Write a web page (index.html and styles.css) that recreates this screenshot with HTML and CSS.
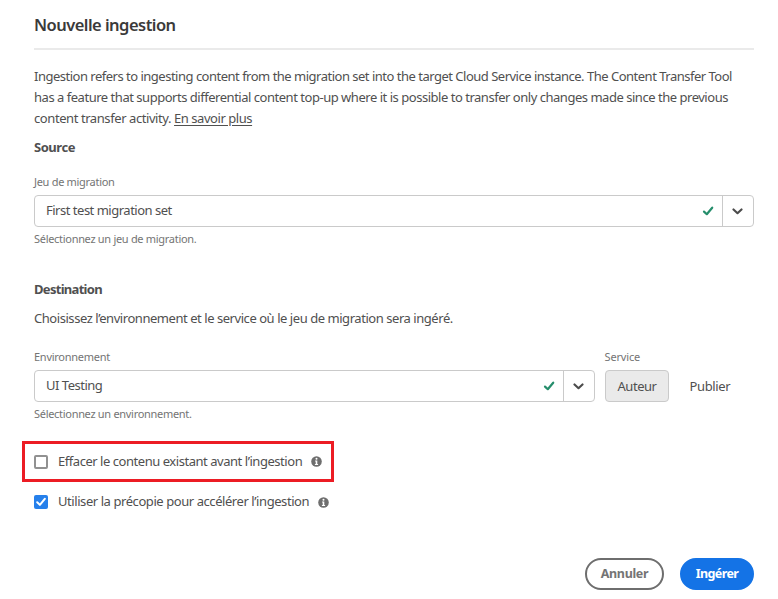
FILE: index.html
```html
<!DOCTYPE html>
<html lang="fr">
<head>
<meta charset="utf-8">
<title>Nouvelle ingestion</title>
<link rel="stylesheet" href="styles.css">
</head>
<body>
<svg class="defs" width="0" height="0" aria-hidden="true">
  <symbol id="chevron" viewBox="0 0 11 7"><path d="M1.5 1.4 5.5 5.2 9.5 1.4" fill="none" stroke="#4b4b4b" stroke-width="2.1" stroke-linecap="round" stroke-linejoin="round"/></symbol>
  <symbol id="valid" viewBox="0 0 12 10"><path d="M2 5.6 4.8 8.2 10.2 1.7" fill="none" stroke="#268e6c" stroke-width="2.2" stroke-linecap="round" stroke-linejoin="round"/></symbol>
  <symbol id="info" viewBox="0 0 11 11"><circle cx="5.5" cy="5.5" r="5.3" fill="#6e6e6e"/><circle cx="5.5" cy="2.7" r="1" fill="#fff"/><path d="M4.1 4.5h2.2v3.4h.8v1H3.9v-1h.8V5.5h-.6z" fill="#fff"/></symbol>
</svg>
<main class="dialog">
  <h1 class="title">Nouvelle ingestion</h1>
  <p class="intro"><span class="line">Ingestion refers to ingesting content from the migration set into the target Cloud Service instance. The Content Transfer Tool</span>
    <span class="line line-second">has a feature that supports differential content top-up where it is possible to transfer only changes made since the previous</span>
    <span class="line line-third">content transfer activity. <a class="link">En savoir plus</a></span></p>

  <section class="source">
    <h2 class="heading heading-source">Source</h2>
    <div class="label">Jeu de migration</div>
    <div class="combo">
      <span class="value">First test migration set</span>
      <svg class="valid"><use href="#valid"/></svg>
      <span class="toggle"><svg class="chevron"><use href="#chevron"/></svg></span>
    </div>
    <div class="help">Sélectionnez un jeu de migration.</div>
  </section>

  <section class="destination">
    <h2 class="heading">Destination</h2>
    <p class="description">Choisissez l’environnement et le service où le jeu de migration sera ingéré.</p>
    <div class="fields">
      <div class="environment">
        <div class="label label-env">Environnement</div>
        <div class="combo">
          <span class="value">UI Testing</span>
          <svg class="valid"><use href="#valid"/></svg>
          <span class="toggle"><svg class="chevron"><use href="#chevron"/></svg></span>
        </div>
        <div class="help">Sélectionnez un environnement.</div>
      </div>
      <div class="service">
        <div class="label label-service">Service</div>
        <div class="choices">
          <span class="choice selected">Auteur</span>
          <span class="choice publish">Publier</span>
        </div>
      </div>
    </div>
  </section>

  <div class="option highlighted">
    <span class="box"></span>
    <span class="option-text">Effacer le contenu existant avant l’ingestion</span>
    <svg class="info"><use href="#info"/></svg>
  </div>
  <div class="option">
    <span class="box checked"><svg class="tick" viewBox="0 0 10 10"><path d="M1.2 5.2 3.9 7.9 8.8 1.8" fill="none" stroke="#fff" stroke-width="2" stroke-linecap="round" stroke-linejoin="round"/></svg></span>
    <span class="option-text precopy">Utiliser la précopie pour accélérer l’ingestion</span>
    <svg class="info"><use href="#info"/></svg>
  </div>

  <footer class="actions">
    <span class="button cancel">Annuler</span>
    <span class="button primary">Ingérer</span>
  </footer>
</main>
</body>
</html>
```
FILE: styles.css
```css
* { box-sizing: border-box; }
body {
  margin: 0;
  background: #fff;
  color: #505050;
  font: 13px/21px "Noto Sans", sans-serif;
  letter-spacing: -.46px;
}
svg { display: block; flex: none; }
.defs { position: absolute; }
h1, h2, p { margin: 0; }
.dialog { width: 720px; margin-left: 34px; padding-top: 12px; }
.title {
  height: 38px;
  border-bottom: 2px solid #eaeaea;
  color: #3a3a3a;
  font-size: 16.5px;
  font-weight: 600;
  line-height: 26px;
  letter-spacing: -.53px;
}
.intro { padding-top: 16px; }
.line { display: block; white-space: nowrap; letter-spacing: -.5px; }
.line-second { letter-spacing: -.475px; }
.line-third { letter-spacing: -.42px; }
.link { text-decoration: underline; text-underline-offset: 2px; letter-spacing: -.45px; }
.source { margin-top: 8px; }
.heading { font-size: 13px; font-weight: 700; line-height: 21px; letter-spacing: -.7px; }
.heading-source { letter-spacing: -.46px; }
.label, .help { color: #747474; font-size: 11px; line-height: 16px; letter-spacing: -.3px; }
.source .label { margin: 16px 0 5px; }
.combo {
  display: flex;
  align-items: center;
  height: 32px;
  padding-left: 11px;
  border: 1px solid #cacaca;
  border-radius: 4px;
}
.value { flex: 1; line-height: 28px; padding-bottom: 2px; letter-spacing: -.49px; }
.valid { width: 12px; height: 10px; margin-right: 8px; }
.toggle {
  display: flex;
  align-items: center;
  width: 31px;
  height: 30px;
  padding-left: 9px;
  border-left: 1px solid #cacaca;
}
.chevron { width: 11px; height: 7px; }
.help { margin-top: 4px; }
.destination { margin-top: 32px; }
.description { margin-top: 8px; letter-spacing: -.45px; }
.fields { display: flex; gap: 10px; margin-top: 20px; }
.fields .label { margin-bottom: 5px; }
.environment { width: 561px; }
.label-env { letter-spacing: -.26px; }
.fields .label-service { margin-left: -.5px; letter-spacing: -.15px; }
.choices { display: flex; gap: 8px; }
.choice {
  height: 32px;
  border: 1px solid transparent;
  border-radius: 4px;
  line-height: 30px;
  padding: 0 11.5px;
}
.selected { width: 64px; background: #eaeaea; border-color: #cacaca; }
.publish { letter-spacing: -.38px; }
.option { display: flex; align-items: center; height: 40px; }
.highlighted {
  width: 312px;
  height: 41px;
  margin: 19px 0 0 -12px;
  padding-left: 9px;
  border: 3px solid #ec1c24;
}
.box { width: 14px; height: 14px; margin-right: 10px; border: 2px solid #919191; border-radius: 2px; }
.checked { display: flex; align-items: center; justify-content: center; border: 0; background: #2680eb; }
.tick { width: 10px; height: 10px; }
.option-text { width: 244px; white-space: nowrap; }
.precopy { width: 251px; padding-bottom: 2px; letter-spacing: -.43px; }
.info { width: 11px; height: 11px; margin-left: 9px; }
.actions { display: flex; justify-content: flex-end; gap: 16px; margin-top: 36px; }
.button {
  height: 32px;
  border-radius: 16px;
  font-size: 12.5px;
  font-weight: 700;
  line-height: 28px;
  text-align: center;
}
.cancel { width: 79px; border: 2px solid #6e6e6e; color: #747474; letter-spacing: -.33px; }
.primary { width: 74px; border: 2px solid #1473e6; background: #1473e6; color: #fff; letter-spacing: -.6px; }
```
